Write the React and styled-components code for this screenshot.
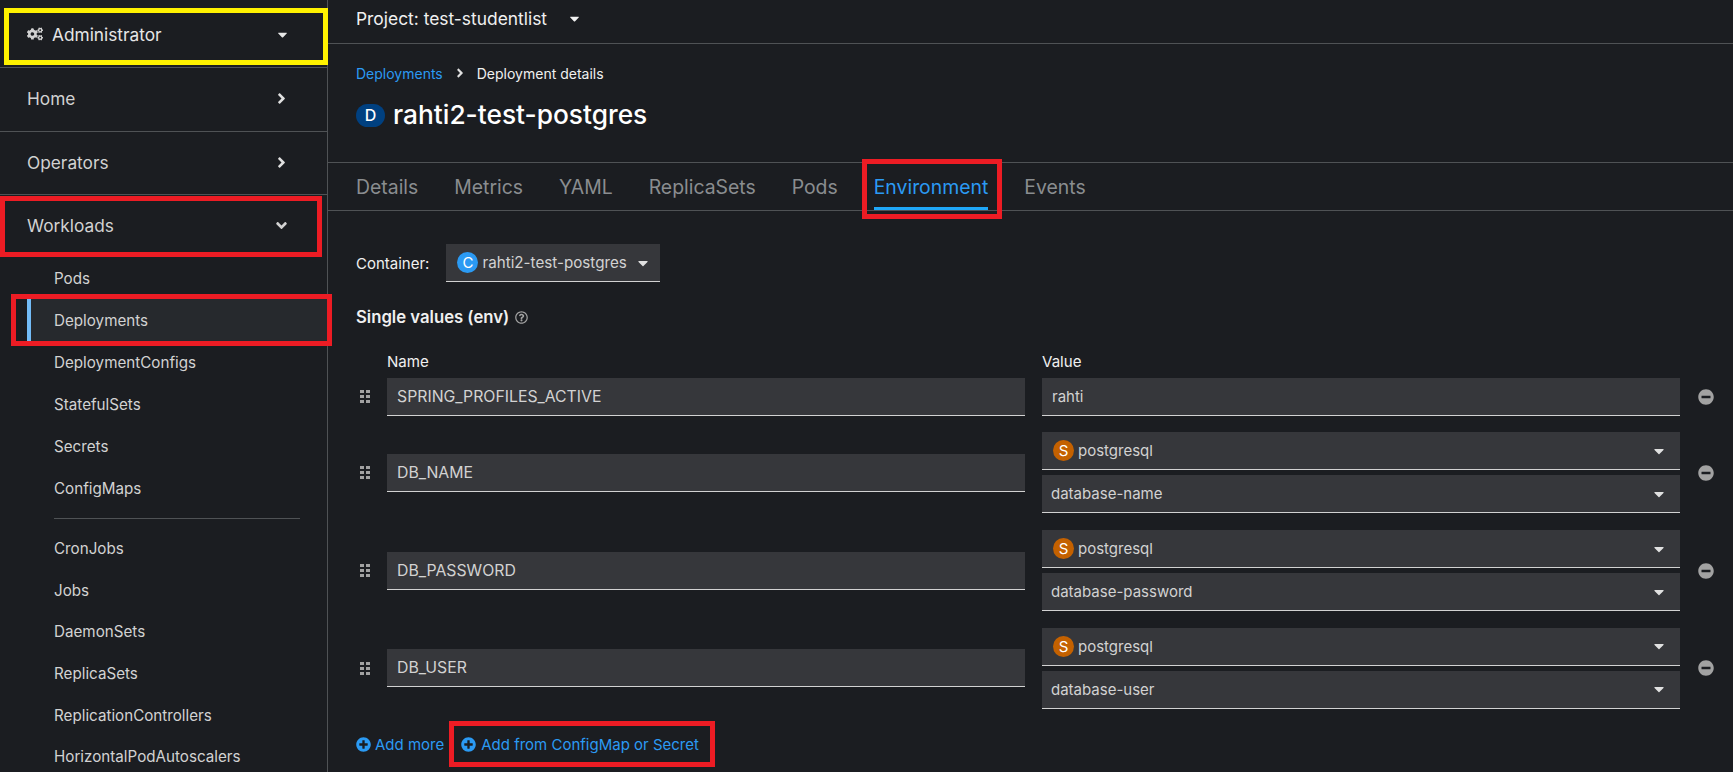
import React from 'react';
import styled, { createGlobalStyle } from 'styled-components';
import {
  FaCogs,
  FaCaretDown,
  FaAngleRight,
  FaAngleDown,
  FaMinusCircle,
  FaPlusCircle,
  FaRegQuestionCircle,
} from 'react-icons/fa';

const GlobalStyle = createGlobalStyle`
  html, body {
    margin: 0;
    padding: 0;
    background: #1b1d21;
  }
  body {
    font-family: "Inter", "Liberation Sans", sans-serif;
    color: #e0e0e0;
  }
`;

const Page = styled.div`
  display: flex;
  width: 1733px;
  height: 772px;
  overflow: hidden;
  background: #1b1d21;
`;

const Sidebar = styled.nav`
  flex: 0 0 327px;
  border-right: 1px solid #4f5255;
  position: relative;
  z-index: 1;
`;

const Section = styled.div`
  position: relative;
  display: flex;
  align-items: center;
  justify-content: space-between;
  height: ${({ $h }) => $h}px;
  padding: ${({ $pt }) => $pt || 0}px 37px ${({ $pb }) => $pb || 0}px 27px;
  box-sizing: border-box;
  font-size: 17.3px;
  color: #d2d2d2;
  border-bottom: ${({ $plain }) => ($plain ? 'none' : '1px solid #4f5255')};
`;

const RoleLabel = styled.span`
  display: flex;
  align-items: center;
  gap: 9px;
  color: #e6e6e6;
`;

const SubList = styled.ul`
  list-style: none;
  margin: 0;
  padding: 0;
`;

const SubItem = styled.li`
  position: relative;
  display: flex;
  align-items: center;
  height: ${({ $h }) => $h || 42}px;
  margin-left: 27px;
  padding-left: 23px;
  font-size: 15.2px;
  color: #d2d2d2;
  border-left: 4px solid ${({ $active }) => ($active ? '#73bcf7' : 'transparent')};
  background: ${({ $active }) => ($active ? '#26292d' : 'transparent')};
`;

const SubDivider = styled.li`
  height: 1px;
  margin: 9px 27px 9px 54px;
  background: #4f5255;
`;

/* annotation rectangles drawn over the screenshot */
const Highlight = styled.span`
  position: absolute;
  top: ${({ $t }) => $t}px;
  left: ${({ $l }) => $l}px;
  right: ${({ $r }) => $r}px;
  bottom: ${({ $b }) => $b}px;
  border: 5px solid ${({ $yellow }) => ($yellow ? '#fff200' : '#ed1c24')};
  pointer-events: none;
`;

const Main = styled.main`
  flex: 1;
  display: flex;
  flex-direction: column;
  min-width: 0;
`;

const ProjectBar = styled.div`
  display: flex;
  align-items: center;
  gap: 20px;
  height: 44px;
  padding: 0 0 7px 28px;
  box-sizing: border-box;
  font-size: 17.4px;
  color: #f0f0f0;
  border-bottom: 1px solid #4f5255;
`;

const PageHead = styled.header`
  height: 119px;
  padding: 19px 0 0 28px;
  box-sizing: border-box;
  border-bottom: 1px solid #4f5255;
`;

const Crumbs = styled.div`
  display: flex;
  align-items: center;
  gap: 10px;
  height: 20px;
  font-size: 14px;
  color: #f0f0f0;
`;

const CrumbLink = styled.a`
  color: #2b9af3;
`;

const Title = styled.h1`
  display: flex;
  align-items: center;
  gap: 8px;
  margin: 16px 0 0;
  font-size: 26.3px;
  font-weight: 500;
  line-height: 32px;
  color: #fff;
`;

const Badge = styled.span`
  display: inline-flex;
  align-items: center;
  justify-content: center;
  flex: none;
  width: ${({ $w }) => $w}px;
  height: ${({ $h }) => $h}px;
  border-radius: 15px;
  background: ${({ $bg }) => $bg};
  color: #fff;
  font-size: ${({ $fs }) => $fs || 14}px;
`;

const Tabs = styled.div`
  display: flex;
  align-items: stretch;
  height: 47px;
  padding-left: 28px;
  border-bottom: 1px solid #4f5255;
`;

const Tab = styled.div`
  position: relative;
  display: flex;
  align-items: center;
  margin-right: 36px;
  font-size: 19.4px;
  color: ${({ $active }) => ($active ? '#2b9af3' : '#8a8d90')};
  &::after {
    content: '';
    display: ${({ $active }) => ($active ? 'block' : 'none')};
    position: absolute;
    left: 0;
    right: 0;
    bottom: 0;
    height: 3px;
    background: #1fa7f8;
  }
`;

const Content = styled.section`
  padding: 33px 0 0 28px;
`;

const ContainerRow = styled.div`
  display: flex;
  align-items: center;
  gap: 17px;
  font-size: 15px;
  color: #f0f0f0;
`;

const Dropdown = styled.div`
  display: flex;
  align-items: center;
  gap: ${({ $gap }) => $gap || 0}px;
  width: ${({ $w }) => ($w ? `${$w}px` : 'auto')};
  height: 38px;
  box-sizing: border-box;
  padding: 0 ${({ $pr }) => $pr || 12}px 0 ${({ $pl }) => $pl || 10}px;
  background: #36373b;
  border-bottom: 1px solid #d2d2d2;
  font-size: ${({ $fs }) => $fs || 15}px;
  color: #d2d2d2;
  white-space: nowrap;

  svg {
    flex: none;
  }
`;

const Grow = styled.span`
  flex: 1;
`;

const SectionTitle = styled.h2`
  display: flex;
  align-items: center;
  gap: 6px;
  margin: 25px 0 0;
  font-size: 16.7px;
  line-height: 20px;
  font-weight: 600;
  color: #f0f0f0;
`;

const EnvGrid = styled.div`
  display: grid;
  grid-template-columns: 31px 638px 655px 50px;
  column-gap: 0;
  row-gap: 16.7px;
  margin-top: 21px;
  align-items: center;
`;

const HeadCell = styled.div`
  height: 26px;
  display: flex;
  align-items: center;
  font-size: 15.1px;
  color: #f0f0f0;
  grid-column: ${({ $col }) => $col};
  margin-left: ${({ $ml }) => $ml || 0}px;
  margin-bottom: -13px;
`;

const Grip = styled.svg`
  width: 10px;
  height: 13px;
  margin-left: 4px;
  fill: #a2a2a2;
`;

const TextField = styled.div`
  display: flex;
  align-items: center;
  height: 38px;
  box-sizing: border-box;
  padding-left: 10px;
  background: #36373b;
  border-bottom: 1px solid #d2d2d2;
  font-size: ${({ $fs }) => $fs || 15.8}px;
  color: #d2d2d2;
`;

const ValueCell = styled.div`
  display: flex;
  flex-direction: column;
  gap: 5px;
  margin-left: 17px;
`;

const RemoveCell = styled.div`
  display: flex;
  margin-left: 18px;
  color: #a2a2a2;
  font-size: 16px;
`;

const Actions = styled.div`
  display: flex;
  align-items: center;
  gap: 17px;
  margin-top: 26px;
  font-size: 15px;
  color: #2b9af3;
`;

const ActionLink = styled.a`
  position: relative;
  display: flex;
  align-items: center;
  gap: ${({ $gap }) => $gap || 5}px;
`;

const rows = [
  { name: 'SPRING_PROFILES_ACTIVE', value: 'rahti' },
  { name: 'DB_NAME', secret: 'database-name' },
  { name: 'DB_PASSWORD', secret: 'database-password' },
  { name: 'DB_USER', secret: 'database-user' },
];

const subItems = ['Pods', 'Deployments', 'DeploymentConfigs', 'StatefulSets', 'Secrets', 'ConfigMaps'];
const subItems2 = ['CronJobs', 'Jobs', 'DaemonSets', 'ReplicaSets', 'ReplicationControllers', 'HorizontalPodAutoscalers'];
const tabs = ['Details', 'Metrics', 'YAML', 'ReplicaSets', 'Pods', 'Environment', 'Events'];

const GripIcon = () => (
  <Grip viewBox="0 0 10 13">
    {[0, 5, 10].map(y => [0, 6].map(x => <rect key={`${x}-${y}`} x={x} y={y} width="4" height="3" />))}
  </Grip>
);

const SecretSelect = ({ text }) => (
  <ValueCell>
    <Dropdown $pl={11} $pr={13} $gap={4}>
      <Badge $w={21} $h={21} $bg="#c46100" $fs={15}>S</Badge>
      <span>postgresql</span>
      <Grow />
      <FaCaretDown size={16} color="#e0e0e0" />
    </Dropdown>
    <Dropdown $pl={9} $pr={13}>
      <span>{text}</span>
      <Grow />
      <FaCaretDown size={16} color="#e0e0e0" />
    </Dropdown>
  </ValueCell>
);

const App = () => (
  <Page>
    <GlobalStyle />
    <Sidebar>
      <Section $h={68} $pt={1}>
        <RoleLabel>
          <FaCogs size={16} color="#d2d2d2" />
          Administrator
        </RoleLabel>
        <FaCaretDown size={15} color="#e6e6e6" />
        <Highlight $yellow $t={8} $l={4} $r={-1} $b={2} />
      </Section>
      <Section $h={64} $pb={2}>
        Home
        <FaAngleRight size={17} color="#e0e0e0" />
      </Section>
      <Section $h={63} $pb={2}>
        Operators
        <FaAngleRight size={17} color="#e0e0e0" />
      </Section>
      <Section $h={62} $plain $pb={1}>
        Workloads
        <FaAngleDown size={17} color="#d2d2d2" />
        <Highlight $t={1} $l={0} $r={5} $b={0} />
      </Section>
      <SubList>
        {subItems.map(item => (
          <SubItem key={item} $active={item === 'Deployments'}>
            {item}
            {item === 'Deployments' && <Highlight $t={-5} $l={-20} $r={-5} $b={-5} />}
          </SubItem>
        ))}
        <SubDivider />
        {subItems2.map(item => (
          <SubItem key={item} $h={41.6}>{item}</SubItem>
        ))}
      </SubList>
    </Sidebar>

    <Main>
      <ProjectBar>
        Project: test-studentlist
        <FaCaretDown size={15} color="#f0f0f0" />
      </ProjectBar>

      <PageHead>
        <Crumbs>
          <CrumbLink>Deployments</CrumbLink>
          <FaAngleRight size={14} color="#e0e0e0" />
          Deployment details
        </Crumbs>
        <Title>
          <Badge $w={29} $h={23} $bg="#004080" $fs={16}>D</Badge>
          rahti2-test-postgres
        </Title>
      </PageHead>

      <Tabs>
        {tabs.map(tab => (
          <Tab key={tab} $active={tab === 'Environment'}>
            {tab}
            {tab === 'Environment' && <Highlight $t={-4} $l={-12} $r={-14} $b={-9} />}
          </Tab>
        ))}
      </Tabs>

      <Content>
        <ContainerRow>
          Container:
          <Dropdown $w={214} $pl={11} $pr={14} $gap={4} $fs={15.2}>
            <Badge $w={21} $h={21} $bg="#2b9af3" $fs={15}>C</Badge>
            <span>rahti2-test-postgres</span>
            <Grow />
            <FaCaretDown size={16} color="#e0e0e0" />
          </Dropdown>
        </ContainerRow>

        <SectionTitle>
          Single values (env)
          <FaRegQuestionCircle size={13} color="#a2a2a2" />
        </SectionTitle>

        <EnvGrid>
          <HeadCell $col={2}>Name</HeadCell>
          <HeadCell $col={3} $ml={17}>Value</HeadCell>
          <div />
          {rows.map(row => (
            <React.Fragment key={row.name}>
              <GripIcon />
              <TextField>{row.name}</TextField>
              {row.secret
                ? <SecretSelect text={row.secret} />
                : <ValueCell><TextField $fs={15}>{row.value}</TextField></ValueCell>}
              <RemoveCell><FaMinusCircle /></RemoveCell>
            </React.Fragment>
          ))}
        </EnvGrid>

        <Actions>
          <ActionLink $gap={4}>
            <FaPlusCircle size={15} />
            Add more
          </ActionLink>
          <ActionLink>
            <FaPlusCircle size={15} />
            Add from ConfigMap or Secret
            <Highlight $t={-14} $l={-12} $r={-16} $b={-13} />
          </ActionLink>
        </Actions>
      </Content>
    </Main>
  </Page>
);

export default App;
